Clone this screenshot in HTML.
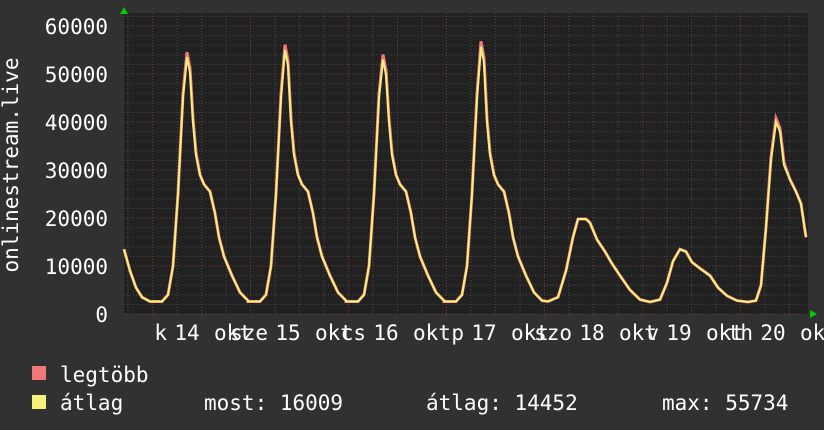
<!DOCTYPE html>
<html><head><meta charset="utf-8"><style>
html,body{margin:0;padding:0;background:#313131;}
svg{display:block}
text{font-family:"DejaVu Sans Mono","Liberation Mono",monospace;fill:#fff;font-size:21px}
</style></head><body>
<svg id="s" width="824" height="430" xmlns="http://www.w3.org/2000/svg">
<rect width="824" height="430" fill="#313131"/>
<rect x="124" y="13" width="684" height="301" fill="#212121"/>
<g id="grid"></g>
<path id="red" fill="none" stroke="#f07878" stroke-width="3"/>
<path id="yel" fill="none" stroke="#f4f07a" stroke-width="2"/>
<polygon points="120,14 128,14 124,7" fill="#0c0"/>
<polygon points="810,310 810,318 817,314" fill="#0c0"/>
<g text-anchor="end">
<text x="108" y="34">60000</text><text x="108" y="82">50000</text><text x="108" y="130">40000</text>
<text x="108" y="178">30000</text><text x="108" y="226">20000</text><text x="108" y="274">10000</text><text x="108" y="322">0</text>
</g>
<text transform="translate(18,165) rotate(-90)" text-anchor="middle">onlinestream.live</text>
<g id="xl"></g>
<rect x="32" y="366" width="14" height="14" fill="#f07878"/>
<rect x="32" y="395" width="14" height="14" fill="#f4f07a"/>
<text x="60" y="382">legtöbb</text>
<text x="60" y="410">átlag</text>
<text x="204" y="410">most: 16009</text>
<text x="426" y="410">átlag: 14452</text>
<text x="662" y="410">max: 55734</text>
</svg>
<script>
var ns="http://www.w3.org/2000/svg",g=document.getElementById('grid');
function ln(x1,y1,x2,y2,c){var l=document.createElementNS(ns,'line');l.setAttribute('x1',x1);l.setAttribute('y1',y1);l.setAttribute('x2',x2);l.setAttribute('y2',y2);l.setAttribute('stroke',c);l.setAttribute('stroke-dasharray','1,2');g.appendChild(l);}
for(var i=0;i<=31;i++){var y=314-i*9.6;if(y<13)break;ln(124,y,808,y,i%5==0?'#7a3a3a':'#4a4a4a');}
for(var x=128;x<808;x+=24.5){var d=Math.abs(((x-152)/98)-Math.round((x-152)/98))<0.05;ln(x,13,x,314,d?'#7a3a3a':'#4a4a4a');}
var day=[[-37,2600],[-25,2600],[-19,4000],[-14,10000],[-9,25000],[-4,45000],[0,1],[3,0.94],[6,40000],[9,33000],[13,29000],[17,27000],[23,25500],[28,21000],[32,16000],[37,12000],[45,8000],[53,4500],[61,2800]];
var pts=[[124,13500],[130,9000],[136,5500],[142,3500]];
[[187,53500],[285,55000],[383,53000],[481,55700]].forEach(function(p){day.forEach(function(d){pts.push([p[0]+d[0],d[1]<2?p[1]*d[1]:d[1]]);});});
pts=pts.concat([[548,2600],[558,3500],[566,9000],[573,16000],[578,19800],[586,19800],[590,19000],[597,15500],[605,13000],[612,10500],[620,8000],[630,5000],[640,3000],[650,2500],[660,3000],[667,6500],[673,11000],[680,13500],[686,13000],[692,10800],[700,9500],[710,8000],[718,5500],[727,3800],[737,2800],[748,2500],[756,2800],[761,6000],[766,18000],[771,32000],[776,40000],[780,38000],[784,31000],[790,28000],[796,25500],[801,23000],[806,16000]]);
function path(sc){var d='';pts.forEach(function(p,i){var v=p[1];if(v>30000)v*=sc;d+=(i?'L':'M')+p[0]+','+(314-v*0.0048).toFixed(1);});return d;}
document.getElementById('red').setAttribute('d',path(1.02));
document.getElementById('yel').setAttribute('d',path(1));
var xl=document.getElementById('xl');
function t(x,s,a){var e=document.createElementNS(ns,'text');e.setAttribute('x',x);e.setAttribute('y',340);e.setAttribute('text-anchor',a);e.textContent=s;xl.appendChild(e);}
var L=[[187,'k','14'],[288,'sze','15'],[386,'cs','16'],[484,'p','17'],[592,'szo','18'],[679,'v','19'],[773,'th','20']];
L.forEach(function(a){t(a[0]-20,a[1],'end');t(a[0],a[2],'middle');t(a[0]+27,'okt','start');});
</script>
</body></html>
